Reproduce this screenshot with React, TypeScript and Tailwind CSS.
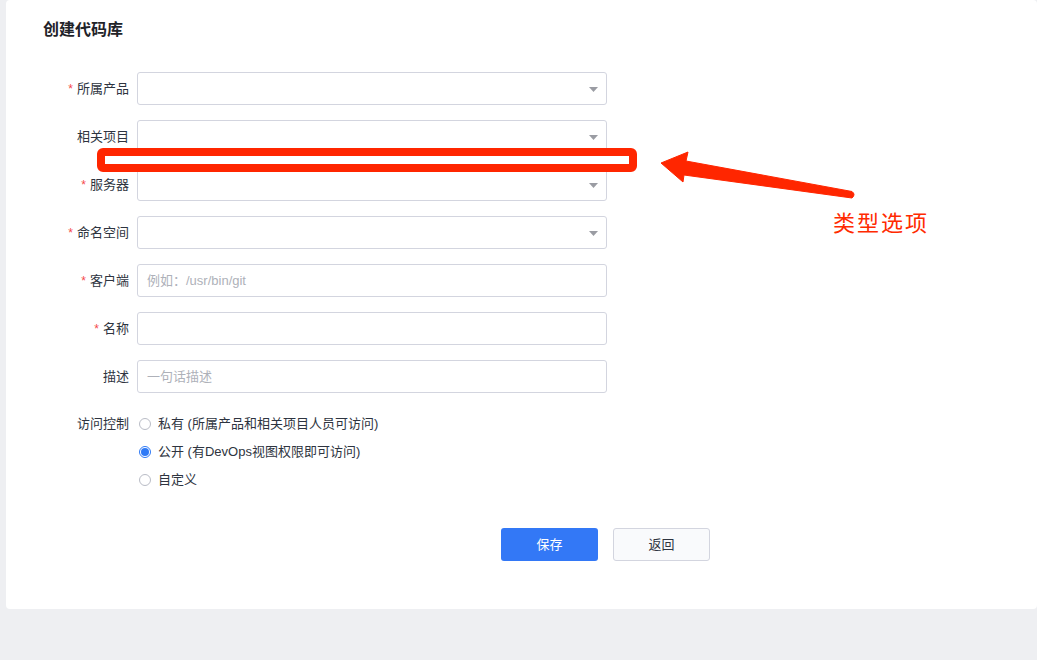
import React from 'react';

const font = { fontFamily: '"Liberation Sans", "Noto Sans CJK SC", sans-serif' };

interface FieldProps {
  label: string;
  required?: boolean;
  select?: boolean;
  placeholder?: string;
}

const Caret = () => (
  <svg width="9" height="5" viewBox="0 0 9 5" className="absolute right-[8px] top-[14px]">
    <path d="M0 0 L9 0 L4.5 5 Z" fill="#9a9ca3" />
  </svg>
);

const Field = ({ label, required, select, placeholder }: FieldProps) => (
  <div className="flex items-center h-[33px]">
    <div className="w-[123px] flex justify-end items-center text-[13px] text-[#2e3440]">
      {required && <span className="text-[#f5484b] mr-[4px] text-[12px]">*</span>}
      <span>{label}</span>
    </div>
    <div className="relative ml-[8px] w-[470px] h-[33px] rounded-[3px] border border-[#d3d5df] bg-white flex items-center px-[9px]">
      {placeholder && <span className="text-[13px] text-[#aeb1b9]">{placeholder}</span>}
      {select && <Caret />}
    </div>
  </div>
);

const Radio = ({ label, checked }: { label: string; checked?: boolean }) => (
  <div className="flex items-center h-[20px] pl-[2px]">
    {checked ? (
      <span className="w-[12px] h-[12px] rounded-full bg-white border border-[#2f7af6] flex items-center justify-center">
        <span className="w-[8px] h-[8px] rounded-full bg-[#2f7af6]" />
      </span>
    ) : (
      <span className="w-[12px] h-[12px] rounded-full border border-[#b9bcc6] bg-white" />
    )}
    <span className="ml-[7px] text-[13px] text-[#2e3440]">{label}</span>
  </div>
);

export default function App() {
  return (
    <div className="relative w-[1037px] h-[660px] bg-[#eeeff2] overflow-hidden" style={font}>
      <div className="ml-[6px] h-[609px] bg-white rounded-[4px]">
        <div className="pl-[37px] pt-[19px] text-[16px] font-semibold text-[#1f2329] leading-[22px]">
          创建代码库
        </div>

        <div className="mt-[31px] flex flex-col gap-[15px]">
          <Field label="所属产品" required select />
          <Field label="相关项目" select />
          <Field label="服务器" required select />
          <Field label="命名空间" required select />
          <Field label="客户端" required placeholder="例如：/usr/bin/git" />
          <Field label="名称" required />
          <Field label="描述" placeholder="一句话描述" />
        </div>

        <div className="mt-[21px] flex">
          <div className="w-[123px] text-right text-[13px] text-[#2e3440] leading-[20px]">访问控制</div>
          <div className="ml-[8px] flex flex-col gap-[8px]">
            <Radio label="私有 (所属产品和相关项目人员可访问)" />
            <Radio label="公开 (有DevOps视图权限即可访问)" checked />
            <Radio label="自定义" />
          </div>
        </div>

        <div className="mt-[38px] pl-[495px] flex gap-[15px]">
          <button className="w-[97px] h-[33px] rounded-[3px] bg-[#3378f6] text-white text-[13px]">保存</button>
          <button className="w-[97px] h-[33px] rounded-[3px] border border-[#d3d5df] bg-[#f9fafc] text-[#2e3440] text-[13px]">
            返回
          </button>
        </div>
      </div>

      {/* annotation overlay */}
      <div className="absolute left-[97px] top-[148px] w-[540px] h-[24px] rounded-[6px] border-[8px] border-[#ff2600] bg-white" />
      <svg className="absolute left-0 top-0" width="1037" height="660" viewBox="0 0 1037 660">
        <path
          d="M661 163 L688 152 L686 161 L852 191.5 Q856 194.5 852 198 L684 175 L683 182 Z"
          fill="#ff2600"
          stroke="#ff2600"
          strokeWidth="1"
          strokeLinejoin="round"
        />
      </svg>
      <div className="absolute left-[833px] top-[209px] text-[22px] leading-[30px] tracking-[2px] text-[#ff2a00]">
        类型选项
      </div>
    </div>
  );
}
